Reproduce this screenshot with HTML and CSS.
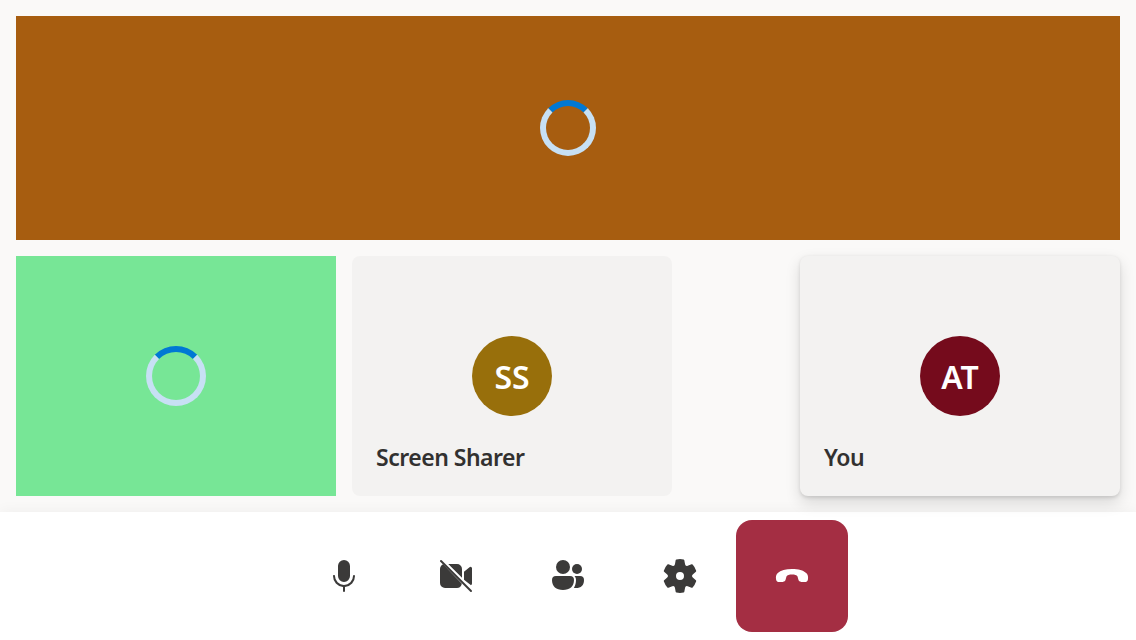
FILE: index.html
```
<!DOCTYPE html>
<html lang="en">
<head>
<meta charset="utf-8">
<title>Call</title>
<link rel="stylesheet" href="styles.css">
</head>
<body>
<div class="call">
  <main class="stage">
    <section class="share"><div class="spinner"></div></section>
    <section class="gallery">
      <div class="tile stream"><div class="spinner spinner-large"></div></div>
      <div class="tile person">
        <div class="avatar gold">SS</div>
        <div class="name">Screen Sharer</div>
      </div>
      <div class="tile person local">
        <div class="avatar maroon">AT</div>
        <div class="name">You</div>
      </div>
    </section>
  </main>
  <nav class="controls">
    <button class="control" aria-label="Mute"><svg viewBox="0 0 20 20"><path d="M10 13a3 3 0 0 0 3-3V5a3 3 0 0 0-6 0v5a3 3 0 0 0 3 3ZM5 9.500c.28 0 .5.22.5.5a4.500 4.500 0 0 0 9 0 .5.5 0 0 1 1 0 5.500 5.500 0 0 1-5 5.480v2.020a.5.5 0 0 1-1 0v-2.020A5.500 5.500 0 0 1 4.500 10c0-.28.22-.5.5-.5Z"/></svg></button>
    <button class="control" aria-label="Turn on camera"><svg viewBox="0 0 20 20"><path d="M3.560 4.180 12.950 13.900C12.600 15.300 11.700 16 10.500 16h-6A2.500 2.500 0 0 1 2 13.500v-7c0-1 .6-1.900 1.560-2.320zM13 10.880 6.120 4h4.380A2.500 2.500 0 0 1 13 6.500zM14 11.880V7.930l2.770-2.320A.75.75 0 0 1 18 6.190v7.620c0 .37-.2.66-.5.800z"/><path class="slash" d="m2.500 2.500 15 15"/></svg></button>
    <button class="control" aria-label="People"><svg viewBox="0 0 20 20"><circle cx="7.500" cy="5.500" r="3.500"/><circle cx="14.500" cy="6.500" r="2.500"/><path d="M4 10h7a2 2 0 0 1 2 2c0 3.300-2.100 5-5.500 5S2 15.300 2 12a2 2 0 0 1 2-2zM13.230 10H16a2 2 0 0 1 2 2c0 2.700-1.500 4-4 4-.4 0-.75-.03-1.080-.1.700-1.050 1.080-2.350 1.080-3.900 0-.77-.29-1.470-.77-2z"/></svg></button>
    <button class="control" aria-label="Settings"><svg viewBox="0 0 20 20"><path d="M1.910 7.380A8.500 8.500 0 0 1 3.690 4.300a.5.5 0 0 1 .54-.13l1.920.68a1 1 0 0 0 1.320-.76l.36-2a.5.5 0 0 1 .4-.4 8.530 8.530 0 0 1 3.550 0c.2.04.35.2.38.4l.37 2a1 1 0 0 0 1.320.76l1.920-.68a.5.5 0 0 1 .54.13 8.500 8.500 0 0 1 1.780 3.080c.06.2 0 .4-.15.54l-1.560 1.320a1 1 0 0 0 0 1.520l1.560 1.320a.5.5 0 0 1 .15.54 8.500 8.500 0 0 1-1.780 3.080.5.5 0 0 1-.54.13l-1.920-.68a1 1 0 0 0-1.320.76l-.37 2a.5.5 0 0 1-.38.4 8.530 8.530 0 0 1-3.560 0 .5.5 0 0 1-.39-.4l-.36-2a1 1 0 0 0-1.320-.76l-1.920.68a.5.5 0 0 1-.54-.13 8.500 8.500 0 0 1-1.780-3.080.5.5 0 0 1 .15-.54l1.560-1.320a1 1 0 0 0 0-1.520L2.060 7.920a.5.5 0 0 1-.15-.54ZM8 10a2 2 0 1 0 4 0 2 2 0 0 0-4 0Z"/></svg></button>
    <button class="control leave" aria-label="Leave"><svg viewBox="0 0 20 20"><path d="M10 6.500c3.200 0 5.700.7 7.100 2.050.85.850 1.080 1.900.86 3.150-.18.950-.8 1.400-1.760 1.350l-1.600-.1c-.75-.05-1.250-.45-1.430-1.150l-.4-1.550C12.400 9.500 11.300 9.250 10 9.250s-2.400.25-2.770 1L6.830 11.800c-.18.700-.68 1.100-1.430 1.150l-1.600.1c-.96.050-1.580-.400-1.760-1.350-.22-1.250.01-2.300.86-3.150C4.300 7.200 6.800 6.500 10 6.500z"/></svg></button>
  </nav>
</div>
</body>
</html>
```
FILE: styles.css
```
* { box-sizing: border-box; }

body {
  margin: 0;
  font-family: "Noto Sans", "Open Sans", sans-serif;
  font-weight: 600;
  color: #323130;
}

.call {
  display: flex;
  flex-direction: column;
  height: 640px;
  overflow: hidden;
  background: #faf9f8;
}

.stage {
  display: flex;
  flex-direction: column;
  gap: 16px;
  height: 512px;
  padding: 16px;
}

.share {
  display: grid;
  place-items: center;
  height: 224px;
  background: #a75d10;
}

.gallery {
  display: flex;
  gap: 16px;
}

.tile {
  width: 320px;
  height: 240px;
}

.stream {
  display: grid;
  place-items: center;
  background: #77e696;
}

.person {
  display: flex;
  flex-direction: column;
  padding: 80px 24px 0;
  border-radius: 8px;
  background: #f3f2f1;
}

.local {
  position: relative;
  z-index: 1;
  margin-left: auto;
  box-shadow: 0 6.4px 14.4px rgba(0, 0, 0, 0.132), 0 1.2px 3.6px rgba(0, 0, 0, 0.108);
}

.avatar {
  align-self: center;
  width: 80px;
  height: 80px;
  border-radius: 50%;
  color: #fff;
  font-size: 32px;
  line-height: 81px;
  text-align: center;
}

.gold { background: #986f0b; }
.maroon { background: #750b1c; }

.name {
  margin-top: 25px;
  font-size: 23px;
  letter-spacing: -0.5px;
  line-height: 32px;
  white-space: nowrap;
}

.spinner {
  width: 56px;
  height: 56px;
  border: 6px solid #c7e0f4;
  border-top-color: #0078d4;
  border-radius: 50%;
}

.spinner-large {
  width: 60px;
  height: 60px;
}

.controls {
  display: flex;
  justify-content: center;
  height: 128px;
  padding: 8px;
  background: #fff;
  box-shadow: 0 0 14px rgba(0, 0, 0, 0.05);
}

.control {
  display: grid;
  place-items: center;
  width: 112px;
  height: 112px;
  padding: 0;
  border: 0;
  border-radius: 16px;
  background: none;
  color: #3b3a39;
}

.control svg {
  width: 40px;
  height: 40px;
  fill: currentColor;
}

.slash {
  stroke: currentColor;
  stroke-width: 1;
  stroke-linecap: round;
}

.leave {
  background: #a42e43;
  color: #fff;
}
```
